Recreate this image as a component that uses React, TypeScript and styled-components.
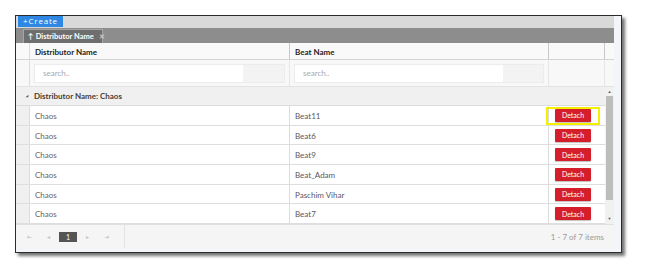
import styled, { createGlobalStyle, css } from "styled-components";

const GlobalStyle = createGlobalStyle`
  html, body {
    margin: 0;
    background: #fff;
    font-family: Lato, "Liberation Sans", sans-serif;
  }
`;

const rows = [
  { dist: "Chaos", beat: "Beat11", marked: true },
  { dist: "Chaos", beat: "Beat6" },
  { dist: "Chaos", beat: "Beat9" },
  { dist: "Chaos", beat: "Beat_Adam" },
  { dist: "Chaos", beat: "Paschim Vihar" },
  { dist: "Chaos", beat: "Beat7" },
];

const COLS = "14px 260px 259px 56px";

export default function App() {
  return (
    <>
      <GlobalStyle />
      <Page>
        <Frame>
          <Grid>
            <Toolbar>
              <CreateButton>+Create</CreateButton>
            </Toolbar>
            <GroupPanel>
              <GroupChip>
                <span>↑</span>
                <span>Distributor Name</span>
                <ChipClose>✕</ChipClose>
              </GroupChip>
            </GroupPanel>
            <HeaderRow>
              <Cell />
              <HeadCell>Distributor Name</HeadCell>
              <HeadCell>Beat Name</HeadCell>
              <HeadCell />
              <Gutter />
            </HeaderRow>
            <FilterRow>
              <Cell />
              <FilterCell>
                <FilterInput>
                  <SearchText>search..</SearchText>
                  <FilterOp />
                </FilterInput>
              </FilterCell>
              <FilterCell>
                <FilterInput>
                  <SearchText>search..</SearchText>
                  <FilterOp />
                </FilterInput>
              </FilterCell>
              <FilterCell />
              <Gutter />
            </FilterRow>
            <Body>
              <Rows>
                <GroupRow>
                  <Caret viewBox="0 0 6 6">
                    <path d="M5 1 L5 5 L1 5 Z" fill="#555" />
                  </Caret>
                  Distributor Name: Chaos
                </GroupRow>
                {rows.map((r, i) => (
                  <DataRow key={i}>
                    <Indent />
                    <DataCell>{r.dist}</DataCell>
                    <DataCell $beat>{r.beat}</DataCell>
                    <CommandCell>
                      <DetachButton>Detach</DetachButton>
                      {r.marked && <Highlight />}
                    </CommandCell>
                  </DataRow>
                ))}
              </Rows>
              <Scrollbar>
                <ScrollArrow>▲</ScrollArrow>
                <Thumb />
                <ScrollArrow>▼</ScrollArrow>
              </Scrollbar>
            </Body>
            <Pager>
              <PagerNav>
                <NavBtn>⇤</NavBtn>
                <NavBtn>◂</NavBtn>
                <PageNum>1</PageNum>
                <NavBtn>▸</NavBtn>
                <NavBtn>⇥</NavBtn>
              </PagerNav>
              <PagerInfo>1 - 7 of 7 items</PagerInfo>
            </Pager>
          </Grid>
        </Frame>
      </Page>
    </>
  );
}

const Page = styled.div`
  width: 652px;
  height: 271px;
  padding: 15px 0 0 15px;
  box-sizing: border-box;
`;

const Frame = styled.div`
  width: 607px;
  height: 238px;
  box-sizing: border-box;
  border: 1px solid #2b2b2b;
  background: #f3f5f9;
  padding: 0 7px 4px 0;
  box-shadow: 3px 3px 3px rgba(0, 0, 0, 0.55);
`;

const Grid = styled.div`
  display: flex;
  flex-direction: column;
  height: 100%;
  background: #fff;
  overflow: hidden;
`;

const Toolbar = styled.div`
  height: 12px;
  background: #d9d9d9;
  padding-left: 2px;
  display: flex;
  align-items: flex-start;
`;

const CreateButton = styled.div`
  width: 45px;
  height: 11px;
  background: #2f87e4;
  color: #fff;
  font-family: "Open Sans", sans-serif;
  font-size: 8px;
  letter-spacing: 0.8px;
  line-height: 10px;
  text-align: center;
`;

const GroupPanel = styled.div`
  height: 15px;
  background: #8d8d8d;
  padding: 1px 0 0 7px;
  box-sizing: border-box;
  display: flex;
`;

const GroupChip = styled.div`
  display: flex;
  align-items: center;
  gap: 2px;
  width: 80px;
  box-sizing: border-box;
  padding-left: 4px;
  background: #6e6e6e;
  border: 1px solid #a5a5a5;
  border-bottom: none;
  color: #fff;
  font-size: 7.5px;
  font-weight: bold;
  white-space: nowrap;
`;

const ChipClose = styled.span`
  color: #c8c8c8;
  font-size: 7px;
  margin-left: 3px;
`;

const rowGrid = css`
  display: grid;
  grid-template-columns: ${COLS} 1fr;
`;

const HeaderRow = styled.div`
  ${rowGrid};
  height: 17px;
  background: #f9f9f9;
  border-bottom: 1px solid #d4d4d4;
  box-sizing: border-box;
`;

const Cell = styled.div`
  border-right: 1px solid #dcdcdc;
`;

const HeadCell = styled(Cell)`
  border-right-color: #c8c8c8;
  padding: 2px 0 0 5px;
  font-size: 8px;
  font-weight: bold;
  color: #222;
  display: flex;
  align-items: center;
`;

const Gutter = styled.div``;

const FilterRow = styled.div`
  ${rowGrid};
  height: 27px;
  background: #f8f8f8;
  border-bottom: 1px solid #e3e3e3;
  box-sizing: border-box;
`;

const FilterCell = styled(Cell)`
  border-right-color: #e6e6e6;
  display: flex;
  align-items: center;
  padding: 0 4px 0 4px;
`;

const FilterInput = styled.div`
  flex: 1;
  height: 19px;
  display: flex;
  border: 1px solid #ececec;
  box-sizing: border-box;
`;

const SearchText = styled.div`
  width: 200px;
  background: #fff;
  color: #a8a8a8;
  font-size: 8px;
  padding-left: 8px;
  display: flex;
  align-items: center;
`;

const FilterOp = styled.div`
  flex: 1;
  background: #f3f3f3;
`;

const Body = styled.div`
  display: flex;
  background: #f0f0f0;
`;

const Rows = styled.div`
  width: 589px;
  display: flex;
  flex-direction: column;
`;

const GroupRow = styled.div`
  height: 19px;
  display: flex;
  align-items: center;
  gap: 5px;
  padding-left: 9px;
  background: #f0f0f0;
  border-bottom: 1px solid #dcdcdc;
  box-sizing: border-box;
  font-size: 8px;
  font-weight: bold;
  color: #4a4036;
`;

const Caret = styled.svg`
  width: 4px;
  height: 4px;
`;

const DataRow = styled.div`
  display: grid;
  grid-template-columns: ${COLS};
  height: 19.7px;
  box-sizing: border-box;
  border-bottom: 1px solid #dedede;
  background: #fff;
`;

const Indent = styled.div`
  background: #f0f0f0;
  border-right: 1px solid #dcdcdc;
`;

const DataCell = styled.div<{ $beat?: boolean }>`
  border-right: 1px solid #dcdcdc;
  padding: 1px 0 0 5px;
  display: flex;
  align-items: center;
  font-size: 8px;
  color: ${(p) => (p.$beat ? "#5a5560" : "#6d625a")};
`;

const CommandCell = styled.div`
  position: relative;
  display: flex;
  align-items: center;
  padding-left: 6px;
`;

const DetachButton = styled.div`
  width: 36px;
  height: 13px;
  background: #d41f2a;
  border-radius: 1px;
  color: #fff;
  font-size: 7px;
  display: flex;
  align-items: center;
  justify-content: center;
  box-shadow: 0 1px 1px rgba(0, 0, 0, 0.25);
`;

const Highlight = styled.div`
  position: absolute;
  left: -3px;
  top: 1px;
  width: 54px;
  height: 18px;
  border: 2px solid #f6f000;
  box-sizing: border-box;
`;

const Scrollbar = styled.div`
  width: 9px;
  display: flex;
  flex-direction: column;
  align-items: center;
  background: #f1f1f1;
`;

const ScrollArrow = styled.div`
  height: 9px;
  font-size: 4px;
  line-height: 9px;
  color: #555;
`;

const Thumb = styled.div`
  width: 7px;
  height: 104px;
  margin-bottom: 14px;
  background: #bdbdbd;
`;

const Pager = styled.div`
  flex: 1;
  display: flex;
  align-items: center;
  justify-content: space-between;
  background: #f5f5f5;
  border-top: 1px solid #e0e0e0;
  padding: 0 10px 0 4px;
`;

const PagerNav = styled.div`
  display: flex;
  align-items: center;
  height: 100%;
  padding-right: 8px;
  border-right: 1px solid #e2e2e2;
`;

const NavBtn = styled.div`
  width: 19px;
  text-align: center;
  font-size: 6px;
  color: #c4c4c4;
`;

const PageNum = styled.div`
  width: 18px;
  height: 10px;
  margin: 0 1px;
  background: #555;
  color: #fff;
  font-size: 7px;
  display: flex;
  align-items: center;
  justify-content: center;
`;

const PagerInfo = styled.div`
  font-size: 8px;
  color: #9a9a9a;
`;
